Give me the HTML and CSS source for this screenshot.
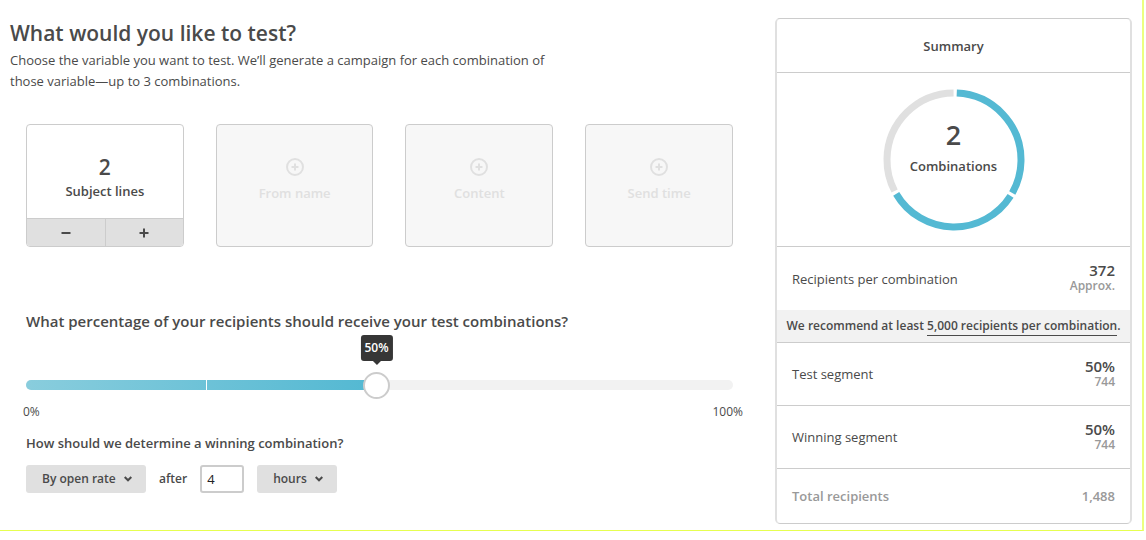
FILE: index.html
```html
<!DOCTYPE html>
<html lang="en">
<head>
<meta charset="utf-8">
<meta name="viewport" content="width=device-width, initial-scale=1">
<title>What would you like to test?</title>
<link rel="stylesheet" href="styles.css">
</head>
<body>
<div class="frame">
  <main class="main">
    <header class="intro">
      <h1 class="title">What would you like to test?</h1>
      <p class="lead">Choose the variable you want to test. We’ll generate a campaign for each combination of those variable—up to 3 combinations.</p>
    </header>

    <section class="variables" aria-label="Variables">
      <div class="card card-active">
        <div class="card-body">
          <span class="card-count">2</span>
          <span class="card-name">Subject lines</span>
        </div>
        <div class="stepper">
          <button class="step" type="button" aria-label="Remove subject line"><svg width="10" height="10" viewBox="0 0 10 10"><path d="M.5 5h9"/></svg></button>
          <button class="step" type="button" aria-label="Add subject line"><svg width="10" height="10" viewBox="0 0 10 10"><path d="M.5 5h9M5 .5v9"/></svg></button>
        </div>
      </div>
      <button class="card card-off" type="button">
        <svg class="add" width="18" height="18" viewBox="0 0 18 18"><circle cx="9" cy="9" r="8"/><path d="M5.5 9h7M9 5.5v7"/></svg>
        <span>From name</span>
      </button>
      <button class="card card-off" type="button">
        <svg class="add" width="18" height="18" viewBox="0 0 18 18"><circle cx="9" cy="9" r="8"/><path d="M5.5 9h7M9 5.5v7"/></svg>
        <span>Content</span>
      </button>
      <button class="card card-off" type="button">
        <svg class="add" width="18" height="18" viewBox="0 0 18 18"><circle cx="9" cy="9" r="8"/><path d="M5.5 9h7M9 5.5v7"/></svg>
        <span>Send time</span>
      </button>
    </section>

    <section class="split">
      <label class="question" for="percent">What percentage of your recipients should receive your test combinations?</label>
      <div class="slider">
        <div class="track"><div class="fill"></div></div>
        <input class="range" id="percent" type="range" min="0" max="100" value="50">
        <output class="tip" for="percent">50%</output>
      </div>
      <div class="scale"><span>0%</span><span>100%</span></div>
    </section>

    <section class="winner">
      <h2 class="subquestion">How should we determine a winning combination?</h2>
      <div class="controls">
        <span class="picker">
          <select class="select" aria-label="Winning metric"><option>By open rate</option></select>
          <svg class="chevron" width="8" height="6" viewBox="0 0 8 6"><path d="M.7 1 4 4.3 7.3 1"/></svg>
        </span>
        <label class="after" for="delay">after</label>
        <input class="delay" id="delay" type="text" value="4">
        <span class="picker">
          <select class="select" aria-label="Time unit"><option>hours</option></select>
          <svg class="chevron" width="8" height="6" viewBox="0 0 8 6"><path d="M.7 1 4 4.3 7.3 1"/></svg>
        </span>
      </div>
    </section>
  </main>

  <aside class="summary">
    <h2 class="summary-title">Summary</h2>
    <div class="chart">
      <svg class="donut" width="142" height="142" viewBox="0 0 142 142" aria-hidden="true">
        <g fill="none" stroke-width="7" transform="rotate(-89 71 71)">
          <circle class="arc" cx="71" cy="71" r="67" pathLength="360" stroke-dasharray="117.2 242.8" stroke-dashoffset="-1.4"/>
          <circle class="arc" cx="71" cy="71" r="67" pathLength="360" stroke-dasharray="117.2 242.8" stroke-dashoffset="-121.4"/>
          <circle class="arc-rest" cx="71" cy="71" r="67" pathLength="360" stroke-dasharray="117.2 242.8" stroke-dashoffset="-241.4"/>
        </g>
      </svg>
      <div class="chart-label">
        <span class="chart-count">2</span>
        <span class="chart-name">Combinations</span>
      </div>
    </div>
    <dl class="rows">
      <div class="row">
        <dt>Recipients per combination</dt>
        <dd class="stacked"><strong>372</strong><small>Approx.</small></dd>
      </div>
      <div class="notice">We recommend at least <a href="#">5,000 recipients per combination</a>.</div>
      <div class="row row-ruled">
        <dt>Test segment</dt>
        <dd class="stacked"><strong>50%</strong><small>744</small></dd>
      </div>
      <div class="row row-ruled">
        <dt>Winning segment</dt>
        <dd class="stacked"><strong>50%</strong><small>744</small></dd>
      </div>
      <div class="row row-total">
        <dt>Total recipients</dt>
        <dd>1,488</dd>
      </div>
    </dl>
  </aside>
</div>
</body>
</html>
```
FILE: styles.css
```css
* { box-sizing: border-box; }

body {
  margin: 0;
  background: #fff;
  color: #4a4a4a;
  font-family: "Open Sans", "Noto Sans", sans-serif;
  font-size: 13px;
  line-height: 20px;
}

h1, h2, p, dl, dd { margin: 0; }
button, input, select { font: inherit; color: inherit; }

.frame {
  display: flex;
  align-items: flex-start;
  margin-right: 2px;
  padding: 18px 10px 6px 10px;
  border-right: 2px solid #ecff80;
  border-bottom: 1px solid #e6ff50;
}

.main { flex: 1; min-width: 0; padding-right: 42px; }

.title { font-size: 21px; line-height: 30px; font-weight: 600; }
.lead { max-width: 560px; margin-top: 2px; line-height: 21px; }

.variables {
  display: grid;
  grid-template-columns: 158fr 158fr 148fr 148fr;
  gap: 32px;
  margin: 32px 0 0 16px;
}

.card {
  display: flex;
  flex-direction: column;
  height: 123px;
  padding: 0;
  border: 1px solid #ccc;
  border-radius: 4px;
  background: #fff;
  font-weight: 600;
  overflow: hidden;
}

.card-body {
  flex: 1;
  display: flex;
  flex-direction: column;
  align-items: center;
  padding-top: 28px;
}

.card-count { font-size: 21px; line-height: 28px; }

.card-off {
  align-items: center;
  gap: 7px;
  padding-top: 33px;
  background: #f7f7f7;
  color: #e0e0e0;
}

.add { fill: none; stroke: #e0e0e0; stroke-width: 2; }

.stepper {
  display: grid;
  grid-template-columns: 1fr 1fr;
  height: 28px;
  border-top: 1px solid #ccc;
}

.step {
  display: grid;
  place-items: center;
  padding: 0;
  border: 0;
  background: #e0e0e0;
}

.step + .step { border-left: 1px solid #ccc; }
.step svg { stroke: #4a4a4a; stroke-width: 2; }

.split { margin: 63px 0 0 16px; }
.question { display: block; font-size: 15px; line-height: 22px; font-weight: 600; }

.slider { position: relative; display: grid; align-items: center; margin-top: 39px; }
.track, .range { grid-area: 1 / 1; }
.track { height: 10px; border-radius: 5px; background: #f2f2f2; overflow: hidden; }

.fill {
  position: relative;
  width: 50%;
  height: 100%;
  background: linear-gradient(to right, #89cddd, #52b8d2);
}

.fill::after {
  content: "";
  position: absolute;
  top: 0;
  bottom: 0;
  left: 51%;
  width: 1px;
  background: #fff;
}

.range {
  position: relative;
  width: calc(100% - 6px);
  height: 28px;
  margin: 0;
  background: transparent;
  appearance: none;
}

.range::-webkit-slider-thumb {
  width: 27px;
  height: 27px;
  border: 2px solid #ccc;
  border-radius: 50%;
  background: #fff;
  appearance: none;
}

.tip {
  position: absolute;
  bottom: 38px;
  left: calc(50% - 3px);
  padding: 3px 4px;
  border-radius: 3px;
  background: #363636;
  color: #fff;
  font-size: 12px;
  font-weight: 600;
  transform: translateX(-50%);
}

.tip::after {
  content: "";
  position: absolute;
  top: 100%;
  left: 50%;
  margin-left: -4px;
  border: 4px solid transparent;
  border-top-color: #363636;
}

.scale { display: flex; justify-content: space-between; margin: 3px -10px 0 -3px; font-size: 12px; }

.winner { margin: 11px 0 0 16px; }
.subquestion { font-size: 13px; font-weight: 600; }
.controls { display: flex; align-items: center; gap: 13px; margin-top: 12px; font-weight: 600; font-size: 12px; }
.picker { position: relative; display: flex; }

.select {
  height: 28px;
  padding: 0 30px 0 16px;
  border: 0;
  border-radius: 3px;
  background: #e0e0e0;
  appearance: none;
}

.chevron {
  position: absolute;
  top: 11px;
  right: 14px;
  fill: none;
  stroke: #4a4a4a;
  stroke-width: 2;
  pointer-events: none;
}

.delay {
  width: 44px;
  height: 28px;
  padding: 0 5px;
  border: 2px solid #ccc;
  border-radius: 3px;
  background: #fff;
  color: #222;
  font-size: 13px;
  font-weight: 400;
}

.summary {
  flex: 0 1 357px;
  border: solid #ccc;
  border-width: 1px 2px;
  border-color: #ccc #e0e0e0;
  border-radius: 5px;
}

.summary-title {
  padding: 17px 0 16px;
  border-bottom: 1px solid #ccc;
  font-size: 13px;
  font-weight: 600;
  text-align: center;
}

.chart {
  display: grid;
  justify-items: center;
  padding: 16px 0 15px;
  border-bottom: 1px solid #ccc;
  font-weight: 600;
}

.donut, .chart-label { grid-area: 1 / 1; }
.donut { display: block; }
.arc { stroke: #54b9d3; }
.arc-rest { stroke: #e0e0e0; }
.chart-label { display: flex; flex-direction: column; align-items: center; padding-top: 28px; }
.chart-count { font-size: 27px; line-height: 36px; }
.chart-name { line-height: 26px; }

.row {
  display: flex;
  align-items: center;
  justify-content: space-between;
  min-height: 63px;
  padding: 0 15px;
}

.row-ruled { border-bottom: 1px solid #ccc; }
.row dd { text-align: right; }
.row .stacked { display: flex; flex-direction: column; padding-bottom: 3px; }
.row strong { font-size: 15px; line-height: 18px; font-weight: 600; }
.row small { color: #999; font-size: 12px; line-height: 14px; font-weight: 600; }
.row-total { min-height: 54px; color: #999; font-weight: 600; }

.notice {
  padding: 6px 0;
  border-bottom: 1px solid #ccc;
  background: #f2f2f2;
  font-size: 12px;
  font-weight: 600;
  text-align: center;
}

.notice a { padding-bottom: 1px; border-bottom: 1px solid #4a4a4a; color: inherit; text-decoration: none; }
```
